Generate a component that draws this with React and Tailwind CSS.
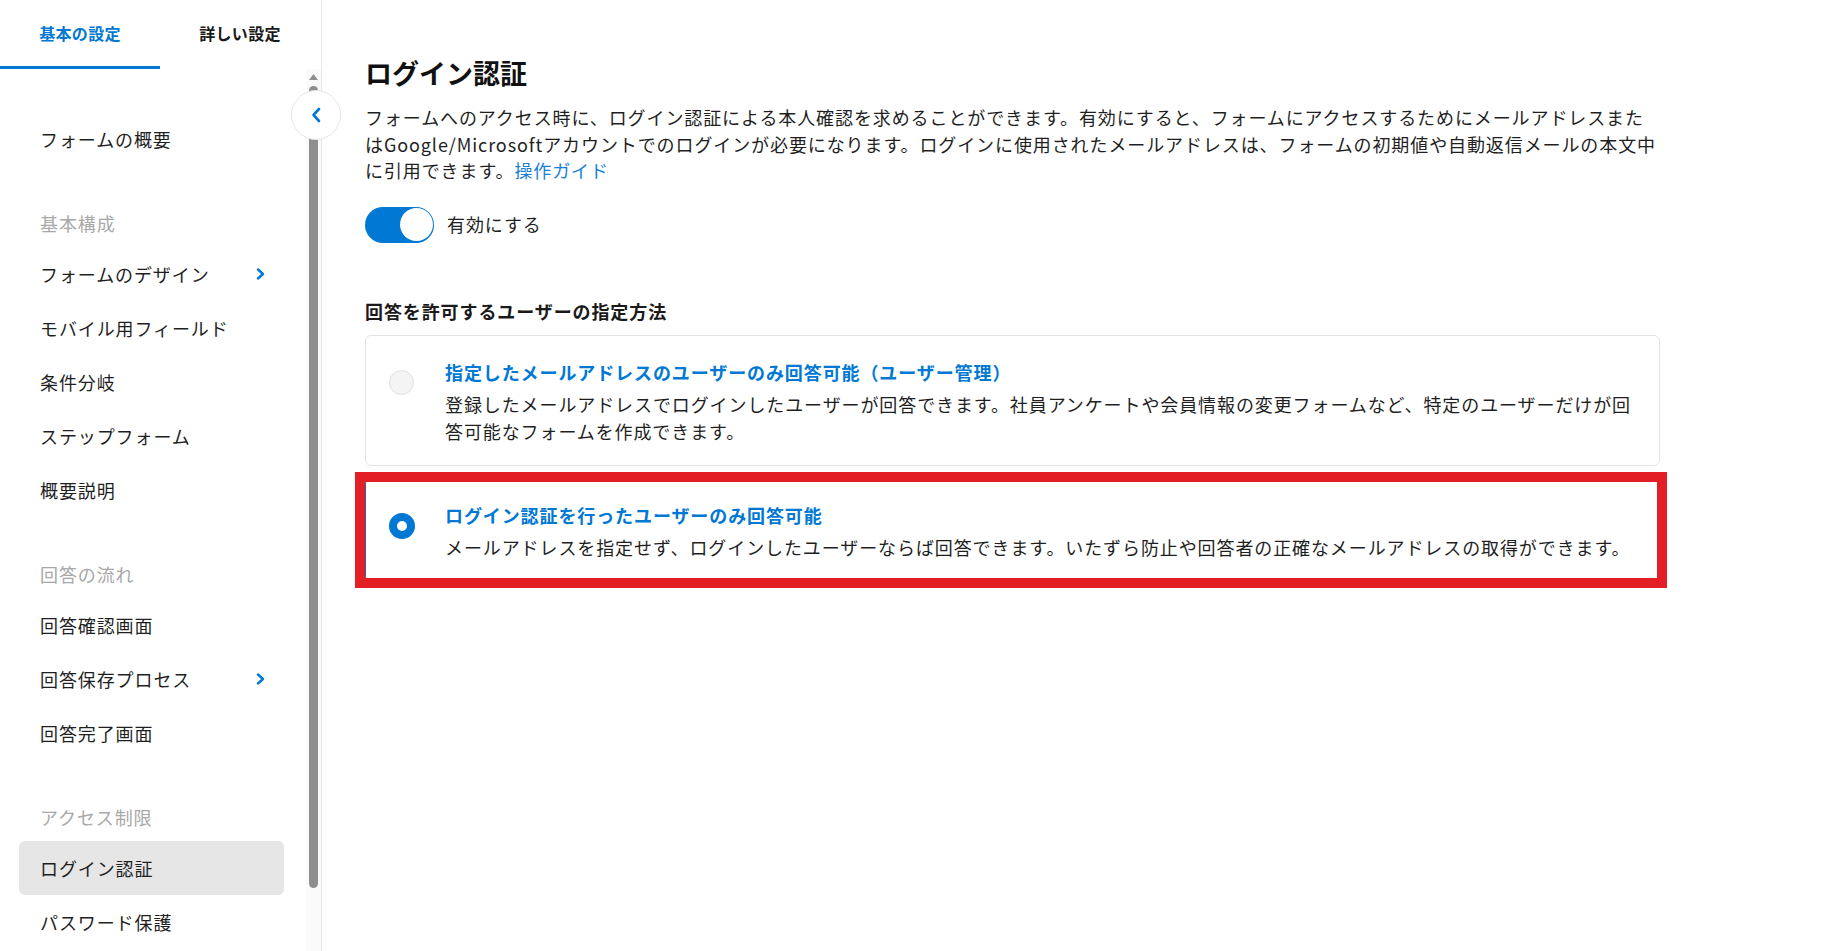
import { useState } from 'react'

const BLUE = '#0078d4'

const groups = [
  { title: null, items: [{ label: 'フォームの概要' }] },
  {
    title: '基本構成',
    items: [
      { label: 'フォームのデザイン', sub: true },
      { label: 'モバイル用フィールド' },
      { label: '条件分岐' },
      { label: 'ステップフォーム' },
      { label: '概要説明' },
    ],
  },
  {
    title: '回答の流れ',
    items: [
      { label: '回答確認画面' },
      { label: '回答保存プロセス', sub: true },
      { label: '回答完了画面' },
    ],
  },
  {
    title: 'アクセス制限',
    items: [{ label: 'ログイン認証', active: true }, { label: 'パスワード保護' }],
  },
]

function ChevronRight() {
  return (
    <svg width="9" height="12" viewBox="0 0 9 12" fill="none">
      <polyline points="2,1.5 7,6 2,10.5" stroke={BLUE} strokeWidth="2.4" strokeLinecap="round" strokeLinejoin="round" />
    </svg>
  )
}

function Sidebar() {
  const [tab, setTab] = useState(0)
  return (
    <aside className="relative w-[322px] shrink-0 h-full border-r border-[#e8e8e8] flex flex-col">
      {/* tabs */}
      <div className="flex h-[69px] shrink-0">
        {['基本の設定', '詳しい設定'].map((t, i) => (
          <button key={t} onClick={() => setTab(i)}
            className={`w-[160px] h-full flex items-center justify-center text-[16px] font-bold tracking-[0.02em] ${tab === i ? 'text-[#0078d4] border-b-[3px] border-[#0078d4]' : 'text-[#1a1a1a] border-b-[3px] border-transparent'}`}>
            {t}
          </button>
        ))}
      </div>

      <div className="flex flex-1 min-h-0">
        <nav className="flex-1 pt-[43px] overflow-hidden">
          {groups.map((g, gi) => (
            <div key={gi} className={gi > 0 ? 'mt-[34px]' : ''}>
              {g.title && (
                <div className="h-[47px] flex items-center pl-[40px] text-[18px] tracking-[0.05em] text-[#a8a8a8]">{g.title}</div>
              )}
              {g.items.map(it => (
                <div key={it.label}
                  className={`h-[54px] ml-[19px] mr-[22px] pl-[21px] pr-[19px] flex items-center rounded-[6px] text-[18px] tracking-[0.05em] text-[#1f1f1f] ${it.active ? 'bg-[#e6e6e6]' : ''}`}>
                  <span>{it.label}</span>
                  {it.sub && <span className="ml-auto flex"><ChevronRight /></span>}
                </div>
              ))}
            </div>
          ))}
        </nav>

        {/* scrollbar */}
        <div className="w-[15px] shrink-0 bg-[#fafafa] flex flex-col items-center pt-[5px]">
          <svg width="9" height="6" viewBox="0 0 9 6"><polygon points="4.5,0 9,6 0,6" fill="#8f8f8f" /></svg>
          <div className="mt-[6px] w-[9px] h-[802px] rounded-full bg-[#8e8e8e]" />
        </div>
      </div>

      {/* collapse button */}
      <button className="absolute top-[90px] -right-[20px] z-10 w-[50px] h-[50px] rounded-full bg-white border border-[#e6e6e6] flex items-center justify-center">
        <svg width="10" height="16" viewBox="0 0 10 16" fill="none">
          <polyline points="8,2 2.5,8 8,14" stroke={BLUE} strokeWidth="2.6" strokeLinecap="round" strokeLinejoin="round" />
        </svg>
      </button>
    </aside>
  )
}

function OptionCard({ title, children, selected }) {
  return (
    <div className={`relative w-[1295px] rounded-[6px] border flex pl-[23px] pt-[23px] pb-[20px] pr-[20px] ${selected ? 'border-[#3b5a9a]' : 'border-[#e4e4e4]'}`}>
      {selected ? (
        <div className="mt-[11px] w-[26px] h-[26px] shrink-0 rounded-full border-[8px] border-[#0078d4] bg-white" />
      ) : (
        <div className="mt-[11px] w-[25px] h-[25px] shrink-0 rounded-full border border-[#e0e0e0] bg-[#f4f4f4]" />
      )}
      <div className={selected ? 'ml-[30px]' : 'ml-[31px]'}>
        <div className="text-[18px] leading-[27px] font-bold tracking-[0.05em] text-[#0078d4]">{title}</div>
        <div className="mt-[5px] text-[18px] leading-[27px] tracking-[0.05em] text-[#1f1f1f] whitespace-nowrap">{children}</div>
      </div>
      {selected && (
        <div className="pointer-events-none absolute -left-[11px] -right-[8px] -top-[7px] -bottom-[7px] border-[10px] border-[#e31e24]" />
      )}
    </div>
  )
}

export default function App() {
  const [enabled, setEnabled] = useState(true)
  return (
    <div className="flex h-[951px] w-full overflow-hidden bg-white text-[#1f1f1f] font-['Noto_Sans_CJK_JP','Noto_Sans',sans-serif]">
      <Sidebar />

      <main className="flex-1 pl-[43px] pt-[54px]">
        <h1 className="text-[27px] leading-[38px] font-bold text-[#111]">ログイン認証</h1>
        <p className="mt-[12px] w-[1340px] text-[18px] leading-[26.5px] tracking-[0.05em] whitespace-nowrap">
          フォームへのアクセス時に、ログイン認証による本人確認を求めることができます。有効にすると、フォームにアクセスするためにメールアドレスまた<br />
          はGoogle/Microsoftアカウントでのログインが必要になります。ログインに使用されたメールアドレスは、フォームの初期値や自動返信メールの本文中<br />
          に引用できます。<a href="#" className="text-[#1b7fd6]">操作ガイド</a>
        </p>

        <div className="mt-[23px] flex items-center gap-[13px]">
          <button onClick={() => setEnabled(!enabled)}
            className={`w-[69px] h-[36px] rounded-full p-[1.5px] flex ${enabled ? 'bg-[#0078d4] justify-end' : 'bg-[#ccc] justify-start'}`}>
            <span className="w-[33px] h-[33px] rounded-full bg-white" />
          </button>
          <span className="text-[18px] tracking-[0.05em]">有効にする</span>
        </div>

        <h2 className="mt-[55px] text-[18px] leading-[26px] font-bold tracking-[0.05em] text-[#1a1a1a]">回答を許可するユーザーの指定方法</h2>

        <div className="mt-[11px]">
          <OptionCard title="指定したメールアドレスのユーザーのみ回答可能（ユーザー管理）">
            登録したメールアドレスでログインしたユーザーが回答できます。社員アンケートや会員情報の変更フォームなど、特定のユーザーだけが回<br />
            答可能なフォームを作成できます。
          </OptionCard>
        </div>
        <div className="mt-[12px]">
          <OptionCard selected title="ログイン認証を行ったユーザーのみ回答可能">
            メールアドレスを指定せず、ログインしたユーザーならば回答できます。いたずら防止や回答者の正確なメールアドレスの取得ができます。
          </OptionCard>
        </div>
      </main>
    </div>
  )
}
